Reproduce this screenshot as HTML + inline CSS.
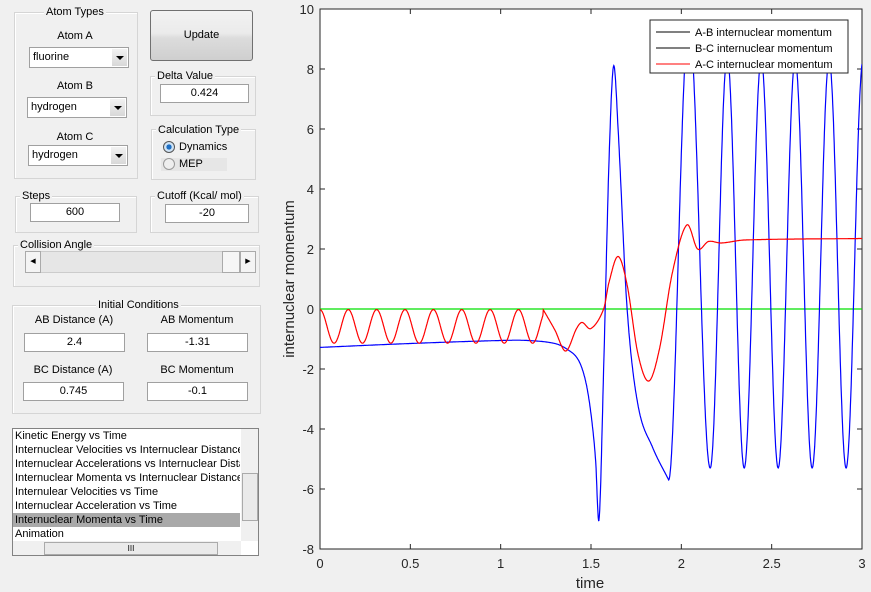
<!DOCTYPE html>
<html><head><style>
body{margin:0;width:871px;height:592px;background:#f0f0f0;font-family:"Liberation Sans",sans-serif;font-size:11px;color:#000;position:relative;overflow:hidden}
.a{position:absolute}
.grp{position:absolute;border:1px solid #d5d5d5;box-shadow:1px 1px 0 #fff inset}
.lg{position:absolute;background:#f0f0f0;padding:0 2px;font-size:11px;white-space:nowrap}
.ed{position:absolute;background:#fff;border:1px solid #a0a0a0;text-align:center;font-size:11px;line-height:17px;height:17px}
.dd{position:absolute;background:#fff;border:1px solid #a0a0a0;height:19px;line-height:19px;padding-left:3px;font-size:11px}
.dd b{position:absolute;right:1px;top:1px;width:15px;height:17px;background:linear-gradient(#f2f2f2,#d8d8d8)}
.dd b:after{content:"";position:absolute;left:4px;top:7px;border:4px solid transparent;border-top:4px solid #000;border-bottom:0}
.c{text-align:center}
</style></head><body>
<div class="grp" style="left:14px;top:12px;width:122px;height:165px"></div>
<div class="lg" style="left:44px;top:6px">Atom Types</div>
<div class="a c" style="left:14px;top:30px;width:122px">Atom A</div>
<div class="dd" style="left:29px;top:47px;width:95px">fluorine<b></b></div>
<div class="a c" style="left:14px;top:80px;width:122px">Atom B</div>
<div class="dd" style="left:27px;top:97px;width:95px">hydrogen<b></b></div>
<div class="a c" style="left:14px;top:131px;width:122px">Atom C</div>
<div class="dd" style="left:28px;top:145px;width:95px">hydrogen<b></b></div>
<div class="a" style="left:150px;top:10px;width:101px;height:49px;border:1px solid #707070;border-radius:3px;background:linear-gradient(#f2f2f2 0,#ebebeb 45%,#dcdcdc 55%,#cfcfcf);text-align:center;line-height:49px">Update</div>
<div class="grp" style="left:150px;top:76px;width:104px;height:38px"></div>
<div class="lg" style="left:155px;top:70px">Delta Value</div>
<div class="ed" style="left:160px;top:84px;width:87px">0.424</div>
<div class="grp" style="left:151px;top:129px;width:103px;height:49px"></div>
<div class="lg" style="left:156px;top:124px">Calculation Type</div>
<div class="a" style="left:161px;top:158px;width:66px;height:13px;background:#e6e6e6"></div>
<div class="a" style="left:163px;top:141px;width:10px;height:10px;border-radius:50%;border:1px solid #555;background:radial-gradient(#1e6fc4 35%,#cfe3f5 40%)"></div>
<div class="a" style="left:179px;top:141px">Dynamics</div>
<div class="a" style="left:163px;top:158px;width:10px;height:10px;border-radius:50%;border:1px solid #999;background:#eee"></div>
<div class="a" style="left:179px;top:158px">MEP</div>
<div class="grp" style="left:15px;top:196px;width:120px;height:35px"></div>
<div class="lg" style="left:20px;top:190px">Steps</div>
<div class="ed" style="left:30px;top:203px;width:88px">600</div>
<div class="grp" style="left:150px;top:196px;width:107px;height:35px"></div>
<div class="lg" style="left:155px;top:190px">Cutoff (Kcal/ mol)</div>
<div class="ed" style="left:165px;top:204px;width:82px">-20</div>
<div class="grp" style="left:13px;top:245px;width:245px;height:40px"></div>
<div class="lg" style="left:18px;top:239px">Collision Angle</div>
<div class="a" style="left:25px;top:251px;width:229px;height:20px;background:#e6e6e6;border:1px solid #ccc"></div>
<div class="a" style="left:25px;top:251px;width:14px;height:20px;background:#f4f4f4;border:1px solid #aaa;font-size:7px;line-height:20px;text-align:center">◀</div>
<div class="a" style="left:222px;top:251px;width:16px;height:20px;background:#f6f6f6;border:1px solid #aaa"></div>
<div class="a" style="left:240px;top:251px;width:14px;height:20px;background:#f4f4f4;border:1px solid #aaa;font-size:7px;line-height:20px;text-align:center">▶</div>
<div class="grp" style="left:12px;top:305px;width:247px;height:107px"></div>
<div class="lg" style="left:96px;top:299px">Initial Conditions</div>
<div class="a c" style="left:24px;top:314px;width:100px">AB Distance (A)</div>
<div class="a c" style="left:147px;top:314px;width:100px">AB Momentum</div>
<div class="ed" style="left:24px;top:333px;width:99px">2.4</div>
<div class="ed" style="left:147px;top:333px;width:99px">-1.31</div>
<div class="a c" style="left:23px;top:364px;width:100px">BC Distance (A)</div>
<div class="a c" style="left:147px;top:364px;width:100px">BC Momentum</div>
<div class="ed" style="left:23px;top:382px;width:99px">0.745</div>
<div class="ed" style="left:147px;top:382px;width:99px">-0.1</div>
<div class="a" style="left:12px;top:428px;width:245px;height:126px;background:#fff;border:1px solid #828282;overflow:hidden;line-height:14px">
<div style="padding-left:2px;white-space:nowrap;width:225px;overflow:hidden">
Kinetic Energy vs Time<br>Internuclear Velocities vs Internuclear Distance<br>Internuclear Accelerations vs Internuclear Distance<br>Internuclear Momenta vs Internuclear Distance<br>Internulear Velocities vs Time<br>Internuclear Acceleration vs Time<br><span style="display:block;background:#a9a9a9;margin-left:-2px;padding-left:2px">Internuclear Momenta vs Time</span>Animation</div>
<div class="a" style="left:228px;top:0;width:17px;height:112px;background:#f0f0f0"></div>
<div class="a" style="left:229px;top:44px;width:14px;height:46px;background:#eaeaea;border:1px solid #aaa"></div>
<div class="a" style="left:0;top:112px;width:228px;height:14px;background:#f0f0f0"></div>
<div class="a" style="left:31px;top:113px;width:172px;height:11px;background:#eaeaea;border:1px solid #aaa;font-size:8px;text-align:center;line-height:11px">III</div>
</div>
<svg class="a" style="left:0;top:0" width="871" height="592">
<rect x="320" y="9" width="542" height="540" fill="#fff" stroke="#262626" stroke-width="1"/>
<g id="tk" stroke="#262626"></g>
<line x1="320" y1="309" x2="862" y2="309" stroke="#00e000" stroke-width="1.2"/>
<clipPath id="cp"><rect x="320" y="9" width="542" height="540"/></clipPath>
<g clip-path="url(#cp)">
<polyline id="blue" fill="none" stroke="#0000ff" stroke-width="1.2"/>
<polyline id="red" fill="none" stroke="#ff0000" stroke-width="1.2"/>
</g>
<g id="lb" font-family="Liberation Sans" font-size="13" fill="#262626"></g>
<text x="590" y="588" font-family="Liberation Sans" font-size="15" fill="#262626" text-anchor="middle">time</text>
<text transform="translate(294,279) rotate(-90)" font-family="Liberation Sans" font-size="15" fill="#262626" text-anchor="middle">internuclear momentum</text>
<rect x="650" y="20" width="198" height="53" fill="#fff" stroke="#262626"/>
<line x1="656" y1="32" x2="690" y2="32" stroke="#000"/>
<line x1="656" y1="48" x2="690" y2="48" stroke="#000"/>
<line x1="656" y1="64" x2="690" y2="64" stroke="#f00"/>
<g font-family="Liberation Sans" font-size="11" fill="#000">
<text x="695" y="36">A-B internuclear momentum</text>
<text x="695" y="52">B-C internuclear momentum</text>
<text x="695" y="68">A-C internuclear momentum</text></g>
</svg>
<script>
var X=t=>320+t*542/3,Y=v=>309-v*30;
var tk='',lb='';
for(var i=0;i<=6;i++){var x=X(i*0.5);tk+=`<line x1="${x}" y1="549" x2="${x}" y2="544"/><line x1="${x}" y1="9" x2="${x}" y2="14"/>`;lb+=`<text x="${x}" y="568" text-anchor="middle">${i*0.5}</text>`;}
for(var v=-8;v<=10;v+=2){var y=Y(v);tk+=`<line x1="320" y1="${y}" x2="325" y2="${y}"/><line x1="862" y1="${y}" x2="857" y2="${y}"/>`;lb+=`<text x="314" y="${y+5}" text-anchor="end">${v}</text>`;}
document.getElementById('tk').innerHTML=tk;document.getElementById('lb').innerHTML=lb;
function cr(P,t){for(var i=0;i<P.length-1;i++){if(t<=P[i+1][0]){var p0=P[Math.max(i-1,0)],p1=P[i],p2=P[i+1],p3=P[Math.min(i+2,P.length-1)];var s=(t-p1[0])/(p2[0]-p1[0]);var m1=(p2[1]-p0[1])/(p2[0]-p0[0])*(p2[0]-p1[0]),m2=(p3[1]-p1[1])/(p3[0]-p1[0])*(p2[0]-p1[0]);var s2=s*s,s3=s2*s;return (2*s3-3*s2+1)*p1[1]+(s3-2*s2+s)*m1+(-2*s3+3*s2)*p2[1]+(s3-s2)*m2;}}return P[P.length-1][1];}
var B=[[0,-1.28],[0.5,-1.15],[1.0,-1.05],[1.15,-1.05],[1.3,-1.15],[1.37,-1.35],[1.43,-1.7],[1.47,-2.4],[1.5,-3.5],[1.525,-5],[1.545,-7.0],[1.57,-2],[1.6,5],[1.625,8.1],[1.65,6],[1.7,0],[1.76,-3.2],[1.84,-4.6],[1.93,-5.7]];
var R=[[1.2355,-0.02],[1.2355,-0.02],[1.3,-0.7],[1.36,-1.4],[1.42,-0.65],[1.45,-0.45],[1.5,-0.65],[1.57,0],[1.6,0.9],[1.65,1.75],[1.7,0.8],[1.76,-1.5],[1.82,-2.4],[1.88,-1.3],[1.95,1.2],[2.03,2.8],[2.09,2.0],[2.15,2.25],[2.22,2.2],[2.35,2.3],[3,2.35]];
var pb=[],pr=[];
for(var t=0;t<=3;t+=0.002){var b;
if(t<1.93)b=cr(B,t);
else{var ph;if(t<2.16)ph=2*Math.PI*(t-1.93)/0.23;else ph=2*Math.PI*(1+(t-2.16)/0.188);
var mn=t<2.16?-5.7+0.4*(t-1.93)/0.23:-5.3;var A=13.6+6*Math.exp(-(t-1.93)/0.08);b=mn+A*(1-Math.cos(ph))/2;}
pb.push(X(t).toFixed(1)+','+Y(b).toFixed(1));
var r;if(t<1.2355)r=-0.58+0.56*Math.sin(2*Math.PI*(t-0.078)/0.157-Math.PI/2);else r=cr(R,t);
pr.push(X(t).toFixed(1)+','+Y(r).toFixed(1));}
document.getElementById('blue').setAttribute('points',pb.join(' '));
document.getElementById('red').setAttribute('points',pr.join(' '));
</script>
</body></html>
